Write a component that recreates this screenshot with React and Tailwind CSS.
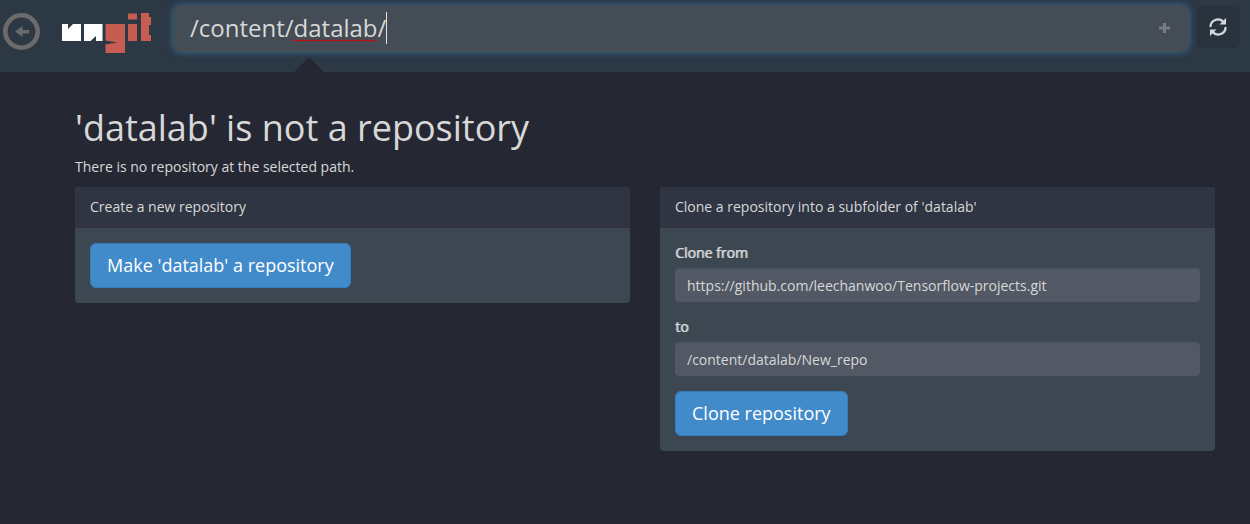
import React from "react";

function Logo() {
  return (
    <svg width="90" height="42" viewBox="0 0 90 42" role="img" aria-label="ungit">
      <g fill="#ffffff">
        <path d="M0 12H6V17L11 12H19V29H0Z" />
        <path d="M22 12H40.5V29H34V24L28.500 29H22Z" />
      </g>
      <g fill="#c75c52">
        <path d="M43.500 12H63V41H43.500V32.500L55 30.500L43.500 28.500Z" />
        <path d="M66 1.500H75V7.500H66Z" />
        <path d="M66 12H75V29H66Z" />
        <path d="M79 1H87V5H89V13H87V23H89V29H79Z" />
      </g>
    </svg>
  );
}

function BackIcon() {
  return (
    <svg width="38" height="38" viewBox="0 0 38 38" aria-hidden="true">
      <circle cx="18.500" cy="19.500" r="16.200" fill="none" stroke="#6b6b6b" strokeWidth="4.600" />
      <path d="M12 19.500L19.500 14V18H26V21.500H19.500V25Z" fill="#6b6b6b" />
    </svg>
  );
}

function RefreshIcon() {
  return (
    <svg width="18" height="18" viewBox="0 0 18 18" aria-hidden="true">
      <g fill="none" stroke="#d8d8d8" strokeWidth="2.200">
        <path d="M1.500 9A7.300 7.300 0 0 1 14.500 4.200" />
        <path d="M16.500 9A7.300 7.300 0 0 1 3.500 13.800" />
      </g>
      <path d="M17 0V6.500H10.500Z" fill="#d8d8d8" />
      <path d="M1 18V11.500H7.500Z" fill="#d8d8d8" />
    </svg>
  );
}

function Header() {
  return (
    <header className="flex h-[72px] items-start bg-[#2c3844]">
      <button type="button" aria-label="Back" className="ml-[3px] mt-3 shrink-0">
        <BackIcon />
      </button>
      <a href="#home" aria-label="ungit" className="ml-[21px] mt-3 shrink-0">
        <Logo />
      </a>
      <div className="relative ml-[21px] mt-[5px] min-w-0 flex-1">
        <input
          type="text"
          aria-label="Repository path"
          defaultValue="/content/datalab/"
          spellCheck={false}
          className="block h-[47px] w-full rounded-lg bg-[#444c55] px-[17px] pb-[2px] text-2xl text-[#d8d8d8] shadow-[0_0_7px_#35709c] outline-none"
        />
        <svg
          width="84"
          height="3"
          className="pointer-events-none absolute left-[120px] top-[34px]"
          aria-hidden="true"
        >
          <defs>
            <pattern id="wave" width="4" height="3" patternUnits="userSpaceOnUse">
              <path d="M0 2L1 1L2 1L3 2L4 2" fill="none" stroke="#e00000" strokeWidth="1" />
            </pattern>
          </defs>
          <rect width="84" height="3" fill="url(#wave)" />
        </svg>
        <span className="pointer-events-none absolute left-[213px] top-[7px] h-8 w-px bg-[#e0e0e0]" />
        <button
          type="button"
          aria-label="Add to favourites"
          className="absolute right-[19px] top-[18px]"
        >
          <svg width="11" height="10" viewBox="0 0 11 10" aria-hidden="true">
            <path d="M4 0H7V3.500H11V6.500H7V10H4V6.500H0V3.500H4Z" fill="#767c83" />
          </svg>
        </button>
        <svg
          width="30"
          height="15"
          viewBox="0 0 30 15"
          className="pointer-events-none absolute left-[121px] top-[52px]"
          aria-hidden="true"
        >
          <path d="M0 15L15 0L30 15Z" fill="#252833" />
        </svg>
      </div>
      <button
        type="button"
        aria-label="Refresh"
        className="ml-2 mr-[10px] mt-[5px] flex h-[43px] w-[43px] shrink-0 items-center justify-center rounded-md bg-[#29333d] pr-[2px]"
      >
        <RefreshIcon />
      </button>
    </header>
  );
}

function Panel({ title, children }) {
  return (
    <section className="overflow-hidden rounded bg-[#3d4752]">
      <h2 className="border-b border-[#35313c] bg-[#2f3543] px-[15px] py-[10px]">{title}</h2>
      <div className="p-[15px]">{children}</div>
    </section>
  );
}

function Field({ id, label, value }) {
  return (
    <div className="mb-[15px]">
      <label
        htmlFor={id}
        className="mb-[5px] block [text-shadow:1px_0_0_rgba(216,216,216,0.8)]"
      >
        {label}
      </label>
      <input
        id={id}
        type="text"
        defaultValue={value}
        className="block h-[34px] w-full rounded bg-[#525965] px-3 text-[#d8d8d8] shadow-[inset_0_1px_1px_rgba(0,0,0,0.08)] outline-none"
      />
    </div>
  );
}

function PrimaryButton({ children }) {
  return (
    <button
      type="button"
      className="block rounded-md border border-[#357ebd] bg-[#428bca] px-4 py-[10px] text-lg leading-[23px] text-white"
    >
      {children}
    </button>
  );
}

export default function App() {
  return (
    <div className="min-h-screen bg-[#252833] font-['Open_Sans',sans-serif] text-sm text-[#d8d8d8]">
      <Header />
      <main className="pb-10 pl-[75px] pr-[35px] pt-9">
        <h1 className="mb-[9px] text-4xl leading-10">'datalab' is not a repository</h1>
        <p className="mb-[10px]">There is no repository at the selected path.</p>
        <div className="grid grid-cols-2 items-start gap-[30px]">
          <Panel title="Create a new repository">
            <PrimaryButton>Make 'datalab' a repository</PrimaryButton>
          </Panel>
          <Panel title="Clone a repository into a subfolder of 'datalab'">
            <Field
              id="clone-from"
              label="Clone from"
              value="https://github.com/leechanwoo/Tensorflow-projects.git"
            />
            <Field id="clone-to" label="to" value="/content/datalab/New_repo" />
            <PrimaryButton>Clone repository</PrimaryButton>
          </Panel>
        </div>
      </main>
    </div>
  );
}
